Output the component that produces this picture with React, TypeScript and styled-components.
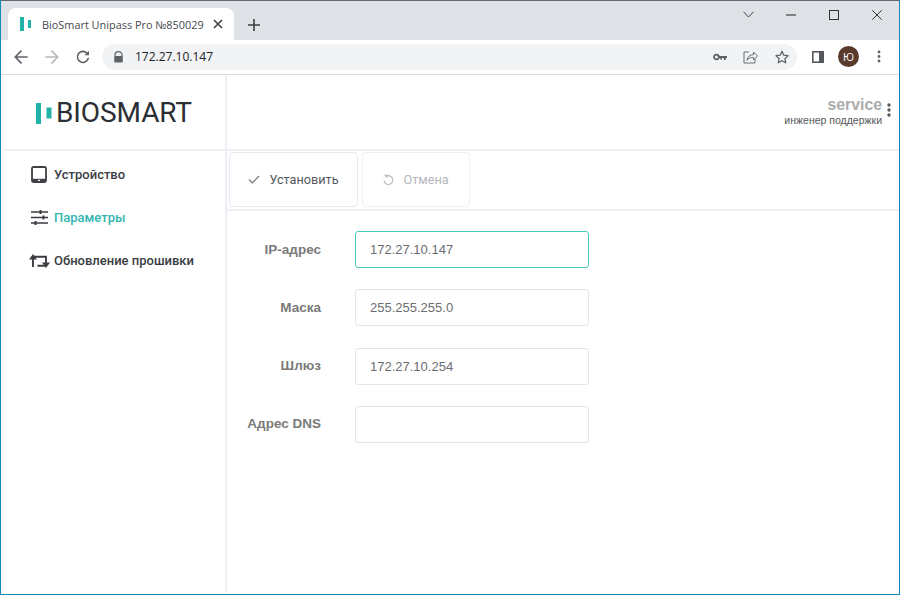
import React from "react";
import styled, { createGlobalStyle } from "styled-components";

const Global = createGlobalStyle`
  html, body { margin: 0; padding: 0; background: #fff; overflow: hidden; }
  * { box-sizing: border-box; }
  #root { width: 900px; height: 595px; }
`;

const Window = styled.div`
  width: 900px; height: 595px; display: flex; flex-direction: column;
  border: 1px solid #1489bb; border-top-color: #5f6a70; background: #fff;
  font-family: "Liberation Sans", Arial, sans-serif; overflow: hidden;
`;
const TitleBar = styled.div`
  height: 39px; flex: none; background: #dee1e6; display: flex; align-items: flex-end; padding-left: 7px;
`;
const Tab = styled.div`
  width: 226px; height: 32px; background: #fff; border-radius: 8px 8px 0 0;
  display: flex; align-items: center; padding: 0 0 0 11px; color: #45494d;
`;
const TabTitle = styled.span`
  font: 10.9px "Open Sans", sans-serif; margin-left: 9px; width: 160px; white-space: nowrap;
`;
const TabClose = styled.span`display: flex; margin-left: 11px;`;
const NewTab = styled.span`display: flex; margin: 0 0 9px 14px;`;
const Spacer = styled.div`flex: 1;`;
const WinControls = styled.div`display: flex; align-self: flex-start; height: 27px; align-items: center; margin-right: 1px;`;
const WinButton = styled.span<{ $w?: number }>`width: ${p => p.$w ?? 43}px; display: flex; justify-content: center;`;

const AddressRow = styled.div`
  height: 35px; flex: none; display: flex; align-items: center; padding: 0 0 1px 5px; border-bottom: 1px solid #dadce0;
`;
const NavButton = styled.span<{ $w?: number }>`width: ${p => p.$w ?? 31}px; flex: none; display: flex; justify-content: center;`;
const Omnibox = styled.div`
  width: 695px; height: 26px; margin-left: 4px; border-radius: 13px; background: #f1f3f4;
  display: flex; align-items: center; padding-left: 11px;
`;
const Url = styled.span`font: 12px "Open Sans", sans-serif; color: #202124; margin-left: 11px; flex: 1;`;
const Avatar = styled.span`
  width: 21px; height: 21px; flex: none; border-radius: 50%; background: #5b3a2e; color: #fff; font: 10.5px "Open Sans", sans-serif;
  display: flex; align-items: center; justify-content: center; margin-left: -1px;
`;

const Page = styled.div`flex: 1; display: flex; min-height: 0; padding-bottom: 2px;`;
const Sidebar = styled.aside`width: 226px; flex: none; border-right: 2px solid #eeeef5; display: flex; flex-direction: column;`;
const LogoBox = styled.div`
  height: 76px; margin-left: 3px; border-bottom: 2px solid #eeeef5; flex: none; display: flex; align-items: center; padding: 2px 0 0 32px;
`;
const LogoText = styled.span`
  font: 400 28px/1 Roboto, sans-serif; color: #2b2e33; letter-spacing: -0.1px; margin-left: 4px;
`;
const Nav = styled.nav`display: flex; flex-direction: column; padding-top: 1.5px;`;
const NavItem = styled.a<{ $active?: boolean }>`
  height: 43.4px; display: flex; align-items: center; padding-left: 25px;
  font: 500 13px Roboto, sans-serif; color: ${p => (p.$active ? "#32b6af" : "#3a3d42")};
`;
const NavIcon = styled.span`width: 26px; display: flex; justify-content: center; margin-right: 2px;`;

const Main = styled.main`flex: 1; min-width: 0; display: flex; flex-direction: column;`;
const Header = styled.header`
  height: 76px; flex: none; border-bottom: 2px solid #eeeef5; display: flex; justify-content: flex-end; align-items: flex-start; padding: 21px 8px 0 0;
`;
const UserInfo = styled.div`display: flex; flex-direction: column; align-items: flex-end;`;
const UserName = styled.span`font: 700 15.8px/18px "Liberation Sans", sans-serif; color: #acacac;`;
const UserRole = styled.span`font: 10.5px/13px "Liberation Sans", sans-serif; color: #55585c;`;
const Dots = styled.span`display: flex; margin: 7px 0 0 5px;`;
const Toolbar = styled.div`
  height: 60px; flex: none; border-bottom: 2px solid #eeeef5; display: flex; gap: 4px; padding: 1px 0 2px 2px;
`;
const ActionButton = styled.button<{ $width: number; $disabled?: boolean }>`
  width: ${p => p.$width}px; height: 55px; background: #fff; border: 1px solid #e8e8ee; border-radius: 4px;
  display: flex; align-items: center; justify-content: center; gap: 9px; padding: 0;
  font: 12.7px Roboto, sans-serif; color: ${p => (p.$disabled ? "#b4b8bd" : "#55595e")};
  ${p => (p.$disabled ? "border-color: #f0f0f4;" : "")}
`;
const Form = styled.form`display: flex; flex-direction: column; gap: 21.33px; padding: 20px 0 0 0;`;
const Row = styled.div`display: flex; align-items: center; gap: 34px;`;
const Label = styled.label<{ $shift?: number }>`
  width: 94px; text-align: right; font: 700 13.5px "Liberation Sans", sans-serif; color: #7a7a7a; position: relative; top: ${p => p.$shift ?? 0}px;
`;
const Field = styled.div<{ $focus?: boolean }>`
  width: 234px; height: 37px; border: 1px solid ${p => (p.$focus ? "#48c9bb" : "#e4e4ea")}; border-radius: 3px;
  display: flex; align-items: center; padding-left: 14px; font: 13px "Liberation Sans", sans-serif; color: #6b6e72;
`;

const fields = [
  { label: "IP-адрес", value: "172.27.10.147", focus: true, shift: 0 },
  { label: "Маска", value: "255.255.255.0", focus: false, shift: 0 },
  { label: "Шлюз", value: "172.27.10.254", focus: false, shift: -1 },
  { label: "Адрес DNS", value: "", focus: false, shift: -1 },
];

const S = { fill: "none", stroke: "currentColor", strokeLinecap: "round" as const, strokeLinejoin: "round" as const };

export default function App() {
  return (
    <>
      <Global />
      <Window>
        <TitleBar>
          <Tab>
            <svg width="14" height="14" viewBox="0 0 14 14"><rect x="1" y="0" width="4" height="14" fill="#21b3a8" /><rect x="9" y="3" width="3" height="8" fill="#21b3a8" /></svg>
            <TabTitle>BioSmart Unipass Pro №850029</TabTitle>
            <TabClose>
              <svg width="10" height="10" viewBox="0 0 10 10"><path d="M1 1l8 8M9 1l-8 8" stroke="#3c4043" strokeWidth="1.6" /></svg>
            </TabClose>
          </Tab>
          <NewTab>
            <svg width="12" height="12" viewBox="0 0 12 12"><path d="M6 0v12M0 6h12" stroke="#3c4043" strokeWidth="1.6" /></svg>
          </NewTab>
          <Spacer />
          <WinControls>
            <WinButton $w={41}><svg width="11" height="7" viewBox="0 0 11 7"><path d="M.5.8 5.5 6l5-5.2" fill="none" stroke="#3c4043" /></svg></WinButton>
            <WinButton><svg width="10" height="2" viewBox="0 0 10 2"><path d="M0 1h10" stroke="#222" /></svg></WinButton>
            <WinButton><svg width="10" height="10" viewBox="0 0 10 10"><rect x=".5" y=".5" width="9" height="9" fill="none" stroke="#333" /></svg></WinButton>
            <WinButton><svg width="10" height="10" viewBox="0 0 10 10"><path d="M.3.3l9.4 9.4M9.7.3.3 9.7" stroke="#333" /></svg></WinButton>
          </WinControls>
        </TitleBar>
        <AddressRow>
          <NavButton $w={30}><svg width="14" height="14" viewBox="0 0 14 14" color="#5f6368"><path d="M13 7H1.500M7 1.200 1.200 7 7 12.800" {...S} strokeWidth="1.7" /></svg></NavButton>
          <NavButton><svg width="14" height="14" viewBox="0 0 14 14" color="#b4b7bb"><path d="M1 7h11.500M7 1.200 12.800 7 7 12.800" {...S} strokeWidth="1.7" /></svg></NavButton>
          <NavButton><svg width="14" height="14" viewBox="0 0 14 14" color="#5f6368"><path d="M12.200 8.500A5.500 5.500 0 1 1 11 3.200" {...S} strokeWidth="1.6" /><path d="M13 .8v4.400H8.600z" fill="currentColor" /></svg></NavButton>
          <Omnibox>
            <svg width="11" height="12" viewBox="0 0 11 12"><path d="M2 5V3.500a3.500 3.500 0 0 1 7 0V5" fill="none" stroke="#5f6368" strokeWidth="1.2" transform="translate(0 .6)" /><rect x="1.200" y="5" width="8.600" height="6.600" rx="1" fill="#5f6368" /></svg>
            <Url>172.27.10.147</Url>
            <NavButton><svg width="14" height="8" viewBox="0 0 14 8"><circle cx="3.400" cy="4" r="2.400" fill="none" stroke="#5f6368" strokeWidth="1.8" /><path d="M6 3h8v2h-1.200v2h-2V5H9v1.400H7.200V5H6z" fill="#5f6368" /></svg></NavButton>
            <NavButton><svg width="15" height="14" viewBox="0 0 15 14" color="#6b6f73"><path d="M5.500 2H1v11h11V9" {...S} strokeWidth="1" /><path d="M4 10c.4-3.500 3-5.400 6.500-5.400V2L14.500 6l-4 4V7.500C7.500 7.500 5.400 8 4 10z" {...S} strokeWidth="1" /></svg></NavButton>
            <NavButton><svg width="14" height="14" viewBox="0 0 14 14" color="#5f6368"><path d="M7 1.300 8.800 5.200 13 5.700l-3.100 2.900.8 4.200L7 10.700l-3.700 2.100.8-4.200L1 5.700l4.200-.5z" {...S} strokeWidth="1.3" /></svg></NavButton>
          </Omnibox>
          <NavButton $w={42}><svg width="12" height="12" viewBox="0 0 12 12"><rect x=".8" y=".8" width="10.400" height="10.400" fill="none" stroke="#55585c" strokeWidth="1.6" /><rect x="7" y="1" width="4" height="10" fill="#55585c" /></svg></NavButton>
          <Avatar>Ю</Avatar>
          <NavButton $w={40}><svg width="4" height="13" viewBox="0 0 4 13"><circle cx="2" cy="2" r="1.400" fill="#5f6368" /><circle cx="2" cy="6.500" r="1.400" fill="#5f6368" /><circle cx="2" cy="11" r="1.400" fill="#5f6368" /></svg></NavButton>
        </AddressRow>
        <Page>
          <Sidebar>
            <LogoBox>
              <svg width="16" height="21" viewBox="0 0 16 21"><rect x="0" y="0" width="5" height="21" fill="#21b3a8" /><rect x="10.500" y="4.500" width="5" height="11" fill="#21b3a8" /></svg>
              <LogoText>BIOSMART</LogoText>
            </LogoBox>
            <Nav>
              <NavItem>
                <NavIcon><svg width="16" height="17" viewBox="0 0 16 17"><rect x="1" y="1" width="14" height="15" rx="1.500" fill="none" stroke="#3f4147" strokeWidth="1.8" /><path d="M1 12.800h14V16H1z" fill="#3f4147" /><rect x="7" y="13.800" width="2" height="1.200" fill="#fff" /></svg></NavIcon>
                Устройство
              </NavItem>
              <NavItem $active>
                <NavIcon><svg width="17" height="15" viewBox="0 0 17 15" color="#3a3d42"><path d="M0 2h17M0 7.500h17M0 13h17" stroke="currentColor" strokeWidth="1.6" /><path d="M9.500 0v4M12.500 5.500v4M4.500 11v4" stroke="currentColor" strokeWidth="2" /></svg></NavIcon>
                Параметры
              </NavItem>
              <NavItem>
                <NavIcon><svg width="21" height="14" viewBox="0 0 21 14" color="#3a3d42"><path d="M4 4v9M4 2.800h13v8M8.500 11.800H17" fill="none" stroke="currentColor" strokeWidth="1.9" /><path d="M0 5.500l4-5.500 4 5.500zM13 8.500l4 5.500 4-5.500z" fill="currentColor" /></svg></NavIcon>
                Обновление прошивки
              </NavItem>
            </Nav>
          </Sidebar>
          <Main>
            <Header>
              <UserInfo>
                <UserName>service</UserName>
                <UserRole>инженер поддержки</UserRole>
              </UserInfo>
              <Dots><svg width="4" height="14" viewBox="0 0 4 14"><circle cx="2" cy="2" r="1.700" fill="#55585c" /><circle cx="2" cy="7" r="1.700" fill="#55585c" /><circle cx="2" cy="12" r="1.700" fill="#55585c" /></svg></Dots>
            </Header>
            <Toolbar>
              <ActionButton type="button" $width={129}>
                <svg width="12" height="9" viewBox="0 0 12 9"><path d="M1 4.500 4.300 8 11 1" fill="none" stroke="#6e7276" strokeWidth="1.1" /></svg>
                Установить
              </ActionButton>
              <ActionButton type="button" $width={108} $disabled>
                <svg width="11" height="12" viewBox="0 0 11 12"><path d="M2.600 2.600A4.400 4.400 0 1 1 1 6.500" fill="none" stroke="#b4b8bd" strokeWidth="1.1" /><path d="M1 .8h3.400v3.400z" fill="#b4b8bd" /></svg>
                Отмена
              </ActionButton>
            </Toolbar>
            <Form>
              {fields.map(f => (
                <Row key={f.label}>
                  <Label $shift={f.shift}>{f.label}</Label>
                  <Field $focus={f.focus}>{f.value}</Field>
                </Row>
              ))}
            </Form>
          </Main>
        </Page>
      </Window>
    </>
  );
}
